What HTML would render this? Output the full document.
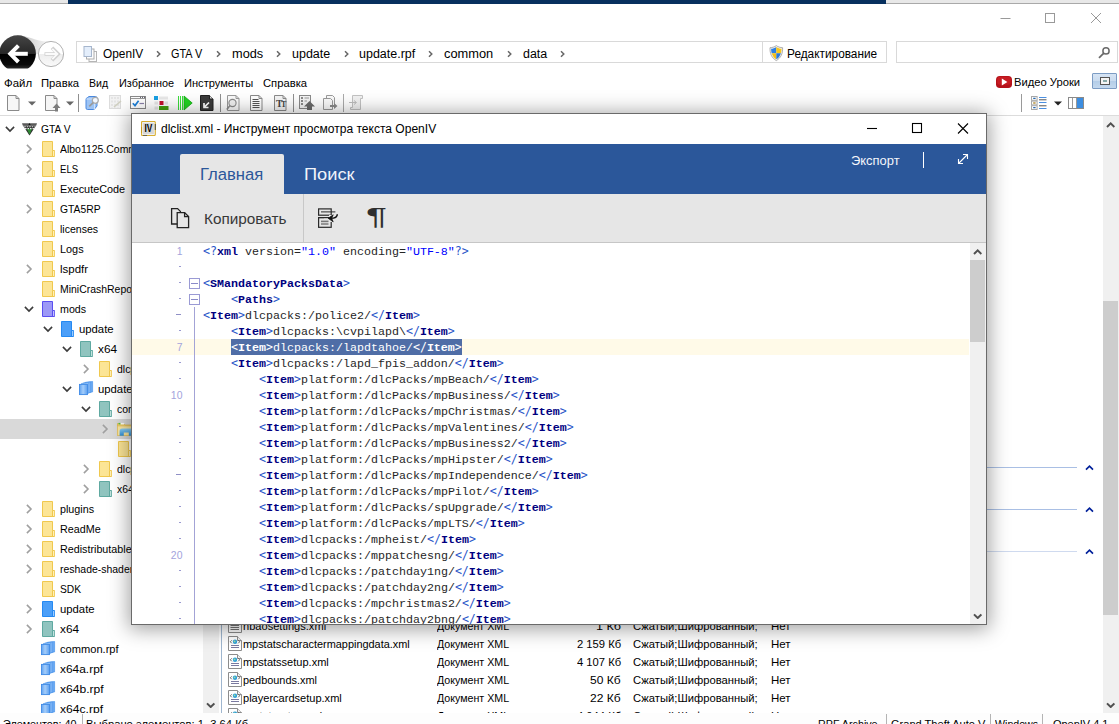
<!DOCTYPE html>
<html lang="ru"><head><meta charset="utf-8"><title>OpenIV</title>
<style>
html,body{margin:0;padding:0;}
body{width:1119px;height:724px;overflow:hidden;position:relative;background:#fff;font-family:'Liberation Sans', sans-serif;font-size:11px;}
.b{position:absolute;display:block;box-sizing:border-box;}
.t{position:absolute;white-space:pre;display:block;}
.code{position:absolute;white-space:pre;font-family:'Liberation Mono', monospace;font-size:11.667px;line-height:16px;color:#262626;height:16px;}
.code b{color:#000080;font-weight:bold;}
.code i{color:#2a55c8;font-style:normal;font-family:'DejaVu Sans Mono','Liberation Mono',monospace;font-size:11.628px;line-height:0;}
.code u{color:#0000ff;text-decoration:none;}
.sel{color:#fff;}
.sel b,.sel i,.sel u{color:#fff;}
</style></head><body>
<svg class="b" style="left:0;top:0;" width="0" height="0"><defs><linearGradient id="rg" x1="0" x2="1" y1="0" y2="0"><stop offset="0" stop-color="#5fa2f0"/><stop offset="0.45" stop-color="#a4cdfa"/><stop offset="1" stop-color="#5b9fef"/></linearGradient><linearGradient id="ob" x1="0" x2="0" y1="0" y2="1"><stop offset="0" stop-color="#8fd0f4"/><stop offset="1" stop-color="#2f8fd8"/></linearGradient><linearGradient id="gold" x1="0" y1="0" x2="1" y2="1"><stop offset="0" stop-color="#f3dc8a"/><stop offset="0.5" stop-color="#c9a13a"/><stop offset="1" stop-color="#e6c458"/></linearGradient></defs></svg>
<div class="b" style="left:0px;top:0px;width:1119px;height:3px;background:#e8e8e8;"></div>
<div class="b" style="left:0px;top:3px;width:1119px;height:1px;background:#a9a9a9;"></div>
<div class="b" style="left:68px;top:0px;width:818px;height:4px;background:#07305e;"></div>
<svg class="b" style="left:998px;top:10px;" width="112" height="18" viewBox="0 0 112 18"><path d="M2.5 8.5H12.5" stroke="#999" stroke-width="1" fill="none"/><rect x="47.5" y="3.5" width="9" height="9" stroke="#999" stroke-width="1" fill="none"/><path d="M93 3L103 13M103 3L93 13" stroke="#999" stroke-width="1" fill="none"/></svg>
<svg class="b" style="left:0px;top:33px;" width="70" height="40" viewBox="0 0 70 40"><defs><linearGradient id="tail" x1="0" x2="1" y1="0" y2="0"><stop offset="0" stop-color="#9a9a9a"/><stop offset="1" stop-color="#f4f4f4"/></linearGradient><linearGradient id="bk" x1="0" x2="0" y1="0" y2="1"><stop offset="0" stop-color="#454545"/><stop offset="0.52" stop-color="#262626"/><stop offset="0.52" stop-color="#000"/><stop offset="0.8" stop-color="#0a0a0a"/><stop offset="1" stop-color="#4a4a4a"/></linearGradient><linearGradient id="fw" x1="0" x2="0" y1="0" y2="1"><stop offset="0.5" stop-color="#fff"/><stop offset="0.5" stop-color="#ededed"/><stop offset="1" stop-color="#fafafa"/></linearGradient><clipPath id="bkc"><rect x="0" y="0" width="70" height="35.5"/></clipPath></defs><path d="M17 2.3 C29 2.3 36 9.5 51 8.4 L44 20 L30 22 Z" fill="url(#tail)" opacity="0.6"/><circle cx="51" cy="21" r="12.6" fill="url(#fw)" stroke="#a9a9a9" stroke-width="0.9"/><path d="M44.5 21H57M52 14.8L58.2 21L52 27.2" stroke="#cfcfcf" stroke-width="3.6" fill="none"/><path d="M45.3 21H57M52.3 15.8L57.4 21L52.3 26.2" stroke="#fbfbfb" stroke-width="1.8" fill="none"/><circle cx="17.6" cy="20.6" r="18.3" fill="url(#bk)" clip-path="url(#bkc)"/><path d="M11 20.8H27.8" stroke="#fff" stroke-width="4" fill="none"/><path d="M18.4 12.6L10.3 20.8L18.4 29" stroke="#fff" stroke-width="4" fill="none" stroke-linejoin="miter"/></svg>
<div class="b" style="left:76px;top:41px;width:811px;height:22px;background:#fff;border:1px solid #d9d9d9;"></div>
<svg class="b" style="left:82px;top:44px;" width="16" height="19" viewBox="0 0 16 19"><rect x="7" y="7.5" width="7.5" height="10" fill="#fdfdfd" stroke="#b5b5b5"/><rect x="4.5" y="5" width="7.5" height="10" fill="#fdfdfd" stroke="#adadad"/><rect x="2" y="2.5" width="7.5" height="10" fill="#e4eefb" stroke="#a6b6cd"/></svg>
<span id="t1" class="t" style="left:103.0px;top:45.5px;font-size:12px;line-height:16px;color:#000;transform:scaleX(0.9876);transform-origin:0 50%;">OpenIV</span>
<span id="t2" class="t" style="left:171.0px;top:45.5px;font-size:12px;line-height:16px;color:#000;transform:scaleX(0.9056);transform-origin:0 50%;">GTA V</span>
<span id="t3" class="t" style="left:232.0px;top:45.5px;font-size:12px;line-height:16px;color:#000;transform:scaleX(1.0633);transform-origin:0 50%;">mods</span>
<span id="t4" class="t" style="left:292.0px;top:45.5px;font-size:12px;line-height:16px;color:#000;transform:scaleX(1.0408);transform-origin:0 50%;">update</span>
<span id="t5" class="t" style="left:359.0px;top:45.5px;font-size:12px;line-height:16px;color:#000;transform:scaleX(1.0398);transform-origin:0 50%;">update.rpf</span>
<span id="t6" class="t" style="left:444.0px;top:45.5px;font-size:12px;line-height:16px;color:#000;transform:scaleX(1.0692);transform-origin:0 50%;">common</span>
<span id="t7" class="t" style="left:523.0px;top:45.5px;font-size:12px;line-height:16px;color:#000;transform:scaleX(1.0360);transform-origin:0 50%;">data</span>
<svg class="b" style="left:155.5px;top:50px;" width="6" height="8" viewBox="0 0 6 8"><path d="M1 1.2L3.8 4L1 6.8" stroke="#666" stroke-width="1.5" fill="none"/></svg>
<svg class="b" style="left:215.5px;top:50px;" width="6" height="8" viewBox="0 0 6 8"><path d="M1 1.2L3.8 4L1 6.8" stroke="#666" stroke-width="1.5" fill="none"/></svg>
<svg class="b" style="left:275.5px;top:50px;" width="6" height="8" viewBox="0 0 6 8"><path d="M1 1.2L3.8 4L1 6.8" stroke="#666" stroke-width="1.5" fill="none"/></svg>
<svg class="b" style="left:343.5px;top:50px;" width="6" height="8" viewBox="0 0 6 8"><path d="M1 1.2L3.8 4L1 6.8" stroke="#666" stroke-width="1.5" fill="none"/></svg>
<svg class="b" style="left:427.5px;top:50px;" width="6" height="8" viewBox="0 0 6 8"><path d="M1 1.2L3.8 4L1 6.8" stroke="#666" stroke-width="1.5" fill="none"/></svg>
<svg class="b" style="left:506.5px;top:50px;" width="6" height="8" viewBox="0 0 6 8"><path d="M1 1.2L3.8 4L1 6.8" stroke="#666" stroke-width="1.5" fill="none"/></svg>
<svg class="b" style="left:559.5px;top:50px;" width="6" height="8" viewBox="0 0 6 8"><path d="M1 1.2L3.8 4L1 6.8" stroke="#666" stroke-width="1.5" fill="none"/></svg>
<div class="b" style="left:762px;top:42px;width:1px;height:20px;background:#d9d9d9;"></div>
<svg class="b" style="left:768.5px;top:45px;" width="15" height="17" viewBox="0 0 15 17"><path d="M7.3 0.6C9.2 2 11.2 2.6 13.6 2.7C13.8 8.6 12 12.8 7.3 15.6C2.6 12.8 0.8 8.6 1 2.7C3.4 2.6 5.4 2 7.3 0.6Z" fill="#f2f2f2" stroke="#9a9a9a" stroke-width="0.8"/><path d="M7.3 1.9C5.7 3 4 3.6 2.1 3.7C2.1 5.4 2.3 6.9 2.7 8.2H7.3Z" fill="#2e80e2"/><path d="M7.3 1.9C8.9 3 10.6 3.6 12.5 3.7C12.5 5.4 12.3 6.9 11.9 8.2H7.3Z" fill="#f6c61c"/><path d="M2.7 8.2H7.3V14.3C4.9 12.8 3.5 10.8 2.7 8.2Z" fill="#f3be18"/><path d="M11.9 8.2H7.3V14.3C9.7 12.8 11.1 10.8 11.9 8.2Z" fill="#2a78da"/></svg>
<span id="t8" class="t" style="left:787.4px;top:45.5px;font-size:12px;line-height:16px;color:#000;transform:scaleX(0.9866);transform-origin:0 50%;">Редактирование</span>
<div class="b" style="left:896px;top:41px;width:222px;height:22px;background:#fff;border:1px solid #d9d9d9;"></div>
<svg class="b" style="left:1097px;top:46px;" width="14" height="14" viewBox="0 0 14 14"><circle cx="9" cy="4.9" r="3.1" stroke="#6a6a6a" stroke-width="1.5" fill="none"/><path d="M6.6 7.3L2 11.9" stroke="#6a6a6a" stroke-width="1.7"/></svg>
<span id="t9" class="t" style="left:4.45px;top:75.5px;font-size:11px;line-height:15px;color:#000;transform:scaleX(1.0389);transform-origin:0 50%;">Файл</span>
<span id="t10" class="t" style="left:41.45px;top:75.5px;font-size:11px;line-height:15px;color:#000;transform:scaleX(1.0250);transform-origin:0 50%;">Правка</span>
<span id="t11" class="t" style="left:89.45px;top:75.5px;font-size:11px;line-height:15px;color:#000;transform:scaleX(0.9595);transform-origin:0 50%;">Вид</span>
<span id="t12" class="t" style="left:119.45px;top:75.5px;font-size:11px;line-height:15px;color:#000;transform:scaleX(0.9883);transform-origin:0 50%;">Избранное</span>
<span id="t13" class="t" style="left:184.45px;top:75.5px;font-size:11px;line-height:15px;color:#000;transform:scaleX(1.0074);transform-origin:0 50%;">Инструменты</span>
<span id="t14" class="t" style="left:263.45px;top:75.5px;font-size:11px;line-height:15px;color:#000;transform:scaleX(1.0219);transform-origin:0 50%;">Справка</span>
<svg class="b" style="left:996px;top:76px;" width="16" height="12" viewBox="0 0 16 12"><rect x="0" y="0" width="16" height="12" rx="3.8" fill="#b5121a"/><rect x="1.2" y="0.8" width="13.6" height="8" rx="3" fill="#cc1f25" opacity="0.8"/><path d="M5.8 2.6L11.4 6L5.8 9.4Z" fill="#fff"/></svg>
<span id="t15" class="t" style="left:1014.45px;top:74.5px;font-size:11px;line-height:15px;color:#000;transform:scaleX(1.0186);transform-origin:0 50%;">Видео Уроки</span>
<div class="b" style="left:1092px;top:73px;width:25px;height:16px;background:linear-gradient(#d6e4f4 0%,#c9dbef 50%,#b4cde8 52%,#c3d8ee 100%);border:1px solid #7c9cc4;border-radius:1px;"></div>
<div class="b" style="left:1100px;top:77px;width:10px;height:8px;background:#f4f4f4;border:1px solid #555;"></div>
<div class="b" style="left:1103px;top:80px;width:4px;height:2px;background:#8aa;"></div>
<svg class="b" style="left:7px;top:95px;" width="12.5" height="16" viewBox="0 0 12.5 16"><path d="M0.5 0.5H9.0 L12.0 3.5V15.5H0.5Z" fill="#f6f6f6" stroke="#8a8a8a"/><path d="M9.0 0.5V3.5H12.0" fill="none" stroke="#8a8a8a"/></svg>
<svg class="b" style="left:28px;top:101px;" width="8" height="5" viewBox="0 0 8 5"><path d="M0 0.5H8L4 4.5Z" fill="#666"/></svg>
<svg class="b" style="left:45px;top:95px;" width="12.5" height="16" viewBox="0 0 12.5 16"><path d="M0.5 0.5H9.0 L12.0 3.5V15.5H0.5Z" fill="#f6f6f6" stroke="#8a8a8a"/><path d="M9.0 0.5V3.5H12.0" fill="none" stroke="#8a8a8a"/></svg>
<svg class="b" style="left:52px;top:103px;" width="9" height="9" viewBox="0 0 9 9"><path d="M4.5 0.5L8.5 5H6V8.5H3V5H0.5Z" fill="#7d7d7d"/></svg>
<svg class="b" style="left:66px;top:101px;" width="8" height="5" viewBox="0 0 8 5"><path d="M0 0.5H8L4 4.5Z" fill="#666"/></svg>
<div class="b" style="left:78px;top:94px;width:1px;height:18px;background:#8f8f8f;"></div>
<svg class="b" style="left:85px;top:95px;" width="15" height="16" viewBox="0 0 15 16"><path d="M1 4.5Q1 3 2.5 2.5L4 1.5H10.5Q12 1.5 12 3V11L10 13.5Q9.5 14.5 8.5 14.5H2.5Q1 14.5 1 13Z" fill="#9cc3f4" stroke="#4a88de"/><path d="M1.5 4H8.5Q9.5 4 9.5 5V14" fill="none" stroke="#cfe2fb"/><circle cx="10.3" cy="5.3" r="3" fill="#f1f7ff" stroke="#a8a8a8" stroke-width="1.2"/><path d="M8.2 7.6L4.2 11.4" stroke="#9a9a9a" stroke-width="1.7"/></svg>
<svg class="b" style="left:109px;top:95px;" width="14" height="16" viewBox="0 0 14 16"><rect x="0.5" y="0.5" width="11" height="13" fill="#f2f2f2" stroke="#dcdcdc"/><path d="M3 2V13M6 2V13M9 2V13" stroke="#d6d6d6" stroke-dasharray="2 1.5"/><path d="M5 12L12 6" stroke="#d0d0c0" stroke-width="1.5"/></svg>
<svg class="b" style="left:130px;top:96px;" width="17" height="14" viewBox="0 0 17 14"><rect x="0.5" y="0.5" width="15" height="12" fill="#fff" stroke="#8a8a8a"/><path d="M1 2.5H15" stroke="#9a9a9a"/><path d="M10 1.3H11M12 1.3H13M14 1.3H15" stroke="#445"/><path d="M2.8 7.2L5 9.6L8.6 4.8" stroke="#1e7fd6" stroke-width="1.7" fill="none"/><path d="M9.5 7.5H14" stroke="#8a80a8" stroke-width="1.2"/></svg>
<svg class="b" style="left:154px;top:96px;" width="15" height="14" viewBox="0 0 15 14"><rect x="0" y="0" width="4" height="4" fill="#18a0e4"/><rect x="5" y="0.5" width="9" height="3" fill="#e9e9e9"/><rect x="5.5" y="5" width="4" height="4" fill="#c4122f"/><rect x="0.5" y="5.5" width="3.5" height="3" fill="#e6e6e6"/><rect x="10.5" y="5.5" width="3.5" height="3" fill="#e6e6e6"/><rect x="5" y="10" width="9.5" height="4" fill="#44a010"/><rect x="0.5" y="10.5" width="3.5" height="3" fill="#e6e6e6"/></svg>
<svg class="b" style="left:177px;top:95px;" width="16" height="16" viewBox="0 0 16 16"><path d="M1.5 1V15M3.5 1V15M5.5 1V15" stroke="#25d825" stroke-width="0.9"/><path d="M7 1L15.2 8L7 15Z" fill="#22d322" stroke="#12a812" stroke-width="0.8"/></svg>
<svg class="b" style="left:200px;top:95px;" width="14" height="16" viewBox="0 0 14 16"><path d="M0.5 0.5H9.5L13 4V15.5H0.5Z" fill="#3c3c3c" stroke="#222"/><path d="M9.5 0.5V4H13" fill="#ddd" stroke="#222"/><path d="M4 8V12.5H8.5M4.3 12.2L9 7.5" stroke="#fff" stroke-width="1.7" fill="none"/></svg>
<div class="b" style="left:220px;top:94px;width:1px;height:18px;background:#8f8f8f;"></div>
<svg class="b" style="left:227px;top:95px;" width="12.5" height="16" viewBox="0 0 12.5 16"><path d="M0.5 0.5H9.0 L12.0 3.5V15.5H0.5Z" fill="#fafafa" stroke="#9a9a9a"/><path d="M9.0 0.5V3.5H12.0" fill="none" stroke="#9a9a9a"/></svg>
<svg class="b" style="left:226px;top:98px;" width="12" height="13" viewBox="0 0 12 13"><circle cx="6.5" cy="5" r="3.6" fill="#f1f1f1" stroke="#8a8a8a" stroke-width="1.1"/><path d="M4 7.6L0.8 11.5" stroke="#8a8a8a" stroke-width="1.5"/></svg>
<svg class="b" style="left:250px;top:95px;" width="12.5" height="16" viewBox="0 0 12.5 16"><path d="M0.5 0.5H9.0 L12.0 3.5V15.5H0.5Z" fill="#fff" stroke="#8a8a8a"/><path d="M9.0 0.5V3.5H12.0" fill="none" stroke="#8a8a8a"/></svg>
<svg class="b" style="left:252px;top:99px;" width="9" height="10" viewBox="0 0 9 10"><path d="M0.5 0.5H6.5M0.5 2.5H7.5M0.5 4.5H7.5M0.5 6.5H7.5M0.5 8.5H7.5" stroke="#555"/></svg>
<svg class="b" style="left:274px;top:95px;" width="12.5" height="16" viewBox="0 0 12.5 16"><path d="M0.5 0.5H9.0 L12.0 3.5V15.5H0.5Z" fill="#f4f4f4" stroke="#8a8a8a"/><path d="M9.0 0.5V3.5H12.0" fill="none" stroke="#8a8a8a"/></svg>
<span id="t16" class="t" style="left:276px;top:97.0px;font-size:10px;line-height:14px;color:#444;font-family:'Liberation Serif',serif;font-weight:bold;">T</span>
<span id="t17" class="t" style="left:281px;top:98.5px;font-size:8px;line-height:12px;color:#444;font-family:'Liberation Serif',serif;font-weight:bold;">T</span>
<div class="b" style="left:293px;top:94px;width:1px;height:18px;background:#8f8f8f;"></div>
<svg class="b" style="left:299px;top:95px;" width="17" height="16" viewBox="0 0 17 16"><rect x="0.5" y="0.5" width="11" height="13" fill="#f4f4f4" stroke="#8a8a8a"/><path d="M2 3H4M2 6H4M2 9H4" stroke="#666" stroke-width="1.4"/><path d="M5.5 3H10M5.5 6H8" stroke="#999"/><path d="M10.5 6L16 11.5H13V15H8V11.5H5Z" fill="#6a6a6a"/></svg>
<svg class="b" style="left:323px;top:95px;" width="15" height="16" viewBox="0 0 15 16"><path d="M3.5 0.5H9.5L11.5 2.5V10.5H3.5Z" fill="#fafafa" stroke="#9a9a9a"/><path d="M0.5 3.5H7.5L9.5 5.5V14.5H0.5Z" fill="#fafafa" stroke="#9a9a9a"/><path d="M7 10H11V8L14.5 11L11 14V12H7Z" fill="#8a8a8a"/></svg>
<div class="b" style="left:343px;top:94px;width:1px;height:18px;background:#aaa;"></div>
<svg class="b" style="left:349px;top:95px;" width="15" height="16" viewBox="0 0 15 16"><path d="M3.5 0.5H13.5V3.5H11.5V14.5H1.5V12.5H3.5Z" fill="#f1f1f1" stroke="#c2c2c2"/><path d="M0 7.5H7M5 5.5L7.5 7.5L5 9.5" stroke="#bdbdbd" fill="none"/></svg>
<div class="b" style="left:1021px;top:94px;width:1px;height:18px;background:#9a9a9a;"></div>
<svg class="b" style="left:1031px;top:96px;" width="16" height="14" viewBox="0 0 16 14"><rect x="0.5" y="0.5" width="5.6" height="3.8" fill="#fdfdfd" stroke="#a8a8a8"/><rect x="0.5" y="5.1" width="5.6" height="3.8" fill="#fdfdfd" stroke="#a8a8a8"/><rect x="0.5" y="9.7" width="5.6" height="3.8" fill="#fdfdfd" stroke="#a8a8a8"/><path d="M2.2 2.4H4.6M2.2 11.6H4.6" stroke="#2a6ab0" stroke-width="1.4"/><path d="M2.2 7H4.6" stroke="#b08a30" stroke-width="1.4"/><path d="M8 1.5H15.5M8 6.5H15.5M8 12.5H15.5" stroke="#4a90e2"/><path d="M8 3.8H15.5M8 9.8H15.5" stroke="#555"/></svg>
<svg class="b" style="left:1054px;top:101px;" width="8" height="5" viewBox="0 0 8 5"><path d="M0 0.5H8L4 4.5Z" fill="#222"/></svg>
<svg class="b" style="left:1068px;top:97px;" width="17" height="13" viewBox="0 0 17 13"><rect x="0.5" y="0.5" width="15" height="11" fill="#fff" stroke="#8a8a8a"/><rect x="9" y="1" width="6" height="10" fill="#3c8de0"/><path d="M4.5 1V11" stroke="#999"/><path d="M8.5 1V11" stroke="#999"/></svg>
<div class="b" style="left:0px;top:115px;width:1119px;height:1px;background:#dcdcdc;"></div>
<div class="b" style="left:0px;top:419px;width:203px;height:20px;background:#d9d9d9;"></div>
<div class="b" style="left:0;top:116px;width:203px;height:597px;overflow:hidden;">
<svg class="b" style="left:4.5px;top:10px;" width="10" height="7" viewBox="0 0 10 7"><path d="M0.9 0.9L5 5L9.1 0.9" stroke="#3c3c3c" stroke-width="1.6" fill="none"/></svg>
<svg class="b" style="left:22px;top:6.8px;" width="15" height="13" viewBox="0 0 15 13"><path d="M0 0.3H15L14.3 2.6H0.7Z" fill="#5a5a5a"/><path d="M1 2.6H14L7.5 12.4Z" fill="#2b2b2b"/><path d="M4.8 5.8L7.5 11.8L10.2 5.8Z" fill="#2f8a35"/><path d="M2.2 3.8H12.8M3 5.6H12" stroke="#e8e8e8" stroke-width="1.1" stroke-dasharray="1.6 0.9"/><path d="M6.4 2L7.5 0L8.6 2Z" fill="#111"/></svg>
<span id="t18" class="t" style="left:41.25px;top:5.5px;font-size:11px;line-height:15px;color:#000;transform:scaleX(0.9369);transform-origin:0 50%;">GTA V</span>
<svg class="b" style="left:25.5px;top:28px;" width="7" height="10" viewBox="0 0 7 10"><path d="M0.9 0.9L5 5L0.9 9.1" stroke="#a0a0a0" stroke-width="1.6" fill="none"/></svg>
<svg class="b" style="left:42px;top:25px;" width="14" height="17" viewBox="0 0 14 17"><path d="M0.5 0.5H10.5V9.5H12.5V15.5H0.5Z" fill="#fce596" stroke="#f0c84e"/><path d="M10.5 9.5V15.5" stroke="#f0c84e"/><rect x="11" y="10" width="1.2" height="5" fill="#fff0b8"/></svg>
<span id="t19" class="t" style="left:60.25px;top:25.5px;font-size:11px;line-height:15px;color:#000;transform:scaleX(0.95);transform-origin:0 50%;">Albo1125.Common</span>
<svg class="b" style="left:25.5px;top:48px;" width="7" height="10" viewBox="0 0 7 10"><path d="M0.9 0.9L5 5L0.9 9.1" stroke="#a0a0a0" stroke-width="1.6" fill="none"/></svg>
<svg class="b" style="left:42px;top:45px;" width="14" height="17" viewBox="0 0 14 17"><path d="M0.5 0.5H10.5V9.5H12.5V15.5H0.5Z" fill="#fce596" stroke="#f0c84e"/><path d="M10.5 9.5V15.5" stroke="#f0c84e"/><rect x="11" y="10" width="1.2" height="5" fill="#fff0b8"/></svg>
<span id="t20" class="t" style="left:60.25px;top:45.5px;font-size:11px;line-height:15px;color:#000;transform:scaleX(0.8703);transform-origin:0 50%;">ELS</span>
<svg class="b" style="left:42px;top:65px;" width="14" height="17" viewBox="0 0 14 17"><path d="M0.5 0.5H10.5V9.5H12.5V15.5H0.5Z" fill="#fce596" stroke="#f0c84e"/><path d="M10.5 9.5V15.5" stroke="#f0c84e"/><rect x="11" y="10" width="1.2" height="5" fill="#fff0b8"/></svg>
<span id="t21" class="t" style="left:60.25px;top:65.5px;font-size:11px;line-height:15px;color:#000;transform:scaleX(0.9857);transform-origin:0 50%;">ExecuteCode</span>
<svg class="b" style="left:25.5px;top:88px;" width="7" height="10" viewBox="0 0 7 10"><path d="M0.9 0.9L5 5L0.9 9.1" stroke="#a0a0a0" stroke-width="1.6" fill="none"/></svg>
<svg class="b" style="left:42px;top:85px;" width="14" height="17" viewBox="0 0 14 17"><path d="M0.5 0.5H10.5V9.5H12.5V15.5H0.5Z" fill="#fce596" stroke="#f0c84e"/><path d="M10.5 9.5V15.5" stroke="#f0c84e"/><rect x="11" y="10" width="1.2" height="5" fill="#fff0b8"/></svg>
<span id="t22" class="t" style="left:60.25px;top:85.5px;font-size:11px;line-height:15px;color:#000;transform:scaleX(0.9397);transform-origin:0 50%;">GTA5RP</span>
<svg class="b" style="left:42px;top:105px;" width="14" height="17" viewBox="0 0 14 17"><path d="M0.5 0.5H10.5V9.5H12.5V15.5H0.5Z" fill="#fce596" stroke="#f0c84e"/><path d="M10.5 9.5V15.5" stroke="#f0c84e"/><rect x="11" y="10" width="1.2" height="5" fill="#fff0b8"/></svg>
<span id="t23" class="t" style="left:60.25px;top:105.5px;font-size:11px;line-height:15px;color:#000;transform:scaleX(0.9585);transform-origin:0 50%;">licenses</span>
<svg class="b" style="left:42px;top:125px;" width="14" height="17" viewBox="0 0 14 17"><path d="M0.5 0.5H10.5V9.5H12.5V15.5H0.5Z" fill="#fce596" stroke="#f0c84e"/><path d="M10.5 9.5V15.5" stroke="#f0c84e"/><rect x="11" y="10" width="1.2" height="5" fill="#fff0b8"/></svg>
<span id="t24" class="t" style="left:60.25px;top:125.5px;font-size:11px;line-height:15px;color:#000;transform:scaleX(0.9891);transform-origin:0 50%;">Logs</span>
<svg class="b" style="left:25.5px;top:148px;" width="7" height="10" viewBox="0 0 7 10"><path d="M0.9 0.9L5 5L0.9 9.1" stroke="#a0a0a0" stroke-width="1.6" fill="none"/></svg>
<svg class="b" style="left:42px;top:145px;" width="14" height="17" viewBox="0 0 14 17"><path d="M0.5 0.5H10.5V9.5H12.5V15.5H0.5Z" fill="#fce596" stroke="#f0c84e"/><path d="M10.5 9.5V15.5" stroke="#f0c84e"/><rect x="11" y="10" width="1.2" height="5" fill="#fff0b8"/></svg>
<span id="t25" class="t" style="left:60.25px;top:145.5px;font-size:11px;line-height:15px;color:#000;transform:scaleX(1.0444);transform-origin:0 50%;">lspdfr</span>
<svg class="b" style="left:42px;top:165px;" width="14" height="17" viewBox="0 0 14 17"><path d="M0.5 0.5H10.5V9.5H12.5V15.5H0.5Z" fill="#fce596" stroke="#f0c84e"/><path d="M10.5 9.5V15.5" stroke="#f0c84e"/><rect x="11" y="10" width="1.2" height="5" fill="#fff0b8"/></svg>
<span id="t26" class="t" style="left:60.25px;top:165.5px;font-size:11px;line-height:15px;color:#000;transform:scaleX(0.95);transform-origin:0 50%;">MiniCrashReports</span>
<svg class="b" style="left:23.5px;top:190px;" width="10" height="7" viewBox="0 0 10 7"><path d="M0.9 0.9L5 5L9.1 0.9" stroke="#3c3c3c" stroke-width="1.6" fill="none"/></svg>
<svg class="b" style="left:42px;top:185px;" width="14" height="17" viewBox="0 0 14 17"><path d="M0.5 0.5H10.5V9.5H12.5V15.5H0.5Z" fill="#9d99f6" stroke="#5a4ff0"/><path d="M10.5 9.5V15.5" stroke="#5a4ff0"/><rect x="11" y="10" width="1.2" height="5" fill="#c3c0ff"/></svg>
<span id="t27" class="t" style="left:60.25px;top:185.5px;font-size:11px;line-height:15px;color:#000;transform:scaleX(0.9700);transform-origin:0 50%;">mods</span>
<svg class="b" style="left:42.5px;top:210px;" width="10" height="7" viewBox="0 0 10 7"><path d="M0.9 0.9L5 5L9.1 0.9" stroke="#3c3c3c" stroke-width="1.6" fill="none"/></svg>
<svg class="b" style="left:61px;top:205px;" width="14" height="17" viewBox="0 0 14 17"><path d="M0.5 0.5H10.5V9.5H12.5V15.5H0.5Z" fill="#4c9ff8" stroke="#2589f2"/><path d="M10.5 9.5V15.5" stroke="#2589f2"/><rect x="11" y="10" width="1.2" height="5" fill="#9ccbff"/></svg>
<span id="t28" class="t" style="left:79.25px;top:205.5px;font-size:11px;line-height:15px;color:#000;transform:scaleX(1.0280);transform-origin:0 50%;">update</span>
<svg class="b" style="left:61.5px;top:230px;" width="10" height="7" viewBox="0 0 10 7"><path d="M0.9 0.9L5 5L9.1 0.9" stroke="#3c3c3c" stroke-width="1.6" fill="none"/></svg>
<svg class="b" style="left:80px;top:225px;" width="14" height="17" viewBox="0 0 14 17"><path d="M0.5 0.5H10.5V9.5H12.5V15.5H0.5Z" fill="#90c4bf" stroke="#5fa9a1"/><path d="M10.5 9.5V15.5" stroke="#5fa9a1"/><rect x="11" y="10" width="1.2" height="5" fill="#c2e2de"/></svg>
<span id="t29" class="t" style="left:98.25px;top:225.5px;font-size:11px;line-height:15px;color:#000;transform:scaleX(1.0761);transform-origin:0 50%;">x64</span>
<svg class="b" style="left:82.5px;top:248px;" width="7" height="10" viewBox="0 0 7 10"><path d="M0.9 0.9L5 5L0.9 9.1" stroke="#a0a0a0" stroke-width="1.6" fill="none"/></svg>
<svg class="b" style="left:99px;top:245px;" width="14" height="17" viewBox="0 0 14 17"><path d="M0.5 0.5H10.5V9.5H12.5V15.5H0.5Z" fill="#fce596" stroke="#f0c84e"/><path d="M10.5 9.5V15.5" stroke="#f0c84e"/><rect x="11" y="10" width="1.2" height="5" fill="#fff0b8"/></svg>
<span id="t30" class="t" style="left:117.25px;top:245.5px;font-size:11px;line-height:15px;color:#000;transform:scaleX(0.95);transform-origin:0 50%;">dlcpacks</span>
<svg class="b" style="left:61.5px;top:270px;" width="10" height="7" viewBox="0 0 10 7"><path d="M0.9 0.9L5 5L9.1 0.9" stroke="#3c3c3c" stroke-width="1.6" fill="none"/></svg>
<svg class="b" style="left:79px;top:264.5px;" width="15" height="16" viewBox="0 0 15 16"><path d="M6.5 1.3L13.6 0.5V10.9L6.5 11.9Z" fill="#6eacf4" stroke="#4a93ea" stroke-width="0.7"/><path d="M4.5 1.9L11.7 1V11.5L4.5 12.5Z" fill="#86baf6" stroke="#4a93ea" stroke-width="0.7"/><path d="M2.5 2.5L9.8 1.6V12.1L2.5 13.1Z" fill="#9cc8f8" stroke="#4a93ea" stroke-width="0.7"/><rect x="0.5" y="3.4" width="8" height="10.2" fill="url(#rg)" stroke="#3f8ae6" stroke-width="0.9"/></svg>
<span id="t31" class="t" style="left:98.25px;top:265.5px;font-size:11px;line-height:15px;color:#000;transform:scaleX(1.0280);transform-origin:0 50%;">update</span>
<svg class="b" style="left:80.5px;top:290px;" width="10" height="7" viewBox="0 0 10 7"><path d="M0.9 0.9L5 5L9.1 0.9" stroke="#3c3c3c" stroke-width="1.6" fill="none"/></svg>
<svg class="b" style="left:99px;top:285px;" width="14" height="17" viewBox="0 0 14 17"><path d="M0.5 0.5H10.5V9.5H12.5V15.5H0.5Z" fill="#90c4bf" stroke="#5fa9a1"/><path d="M10.5 9.5V15.5" stroke="#5fa9a1"/><rect x="11" y="10" width="1.2" height="5" fill="#c2e2de"/></svg>
<span id="t32" class="t" style="left:117.25px;top:285.5px;font-size:11px;line-height:15px;color:#000;transform:scaleX(0.95);transform-origin:0 50%;">common</span>
<svg class="b" style="left:101.5px;top:308px;" width="7" height="10" viewBox="0 0 7 10"><path d="M0.9 0.9L5 5L0.9 9.1" stroke="#a0a0a0" stroke-width="1.6" fill="none"/></svg>
<svg class="b" style="left:117px;top:305.5px;" width="19" height="15" viewBox="0 0 19 15"><path d="M0.5 1.5H6.5L8 3H18V13.5H0.5Z" fill="#f3d06a" stroke="#dcb750" stroke-width="0.8"/><rect x="1.6" y="0.9" width="2" height="1.5" fill="#4cc446"/><rect x="3.6" y="0.9" width="3.6" height="1.5" fill="#fff"/><path d="M0.5 4H18V13.5H0.5Z" fill="#fbe7a2" stroke="#e2c05a" stroke-width="0.6"/><path d="M2.6 13.8V9.2Q2.6 6.6 5.2 6.6H13.4Q16 6.6 16 9.2V13.8H11.8V10.6H6.8V13.8Z" fill="url(#ob)"/></svg>
<span id="t33" class="t" style="left:136.25px;top:305.5px;font-size:11px;line-height:15px;color:#000;transform:scaleX(0.95);transform-origin:0 50%;">data</span>
<svg class="b" style="left:118px;top:325px;" width="14" height="17" viewBox="0 0 14 17"><path d="M0.5 0.5H10.5V9.5H12.5V15.5H0.5Z" fill="#fce596" stroke="#f0c84e"/><path d="M10.5 9.5V15.5" stroke="#f0c84e"/><rect x="11" y="10" width="1.2" height="5" fill="#fff0b8"/></svg>
<span id="t34" class="t" style="left:136.25px;top:325.5px;font-size:11px;line-height:15px;color:#000;transform:scaleX(0.95);transform-origin:0 50%;">dlc_patch</span>
<svg class="b" style="left:82.5px;top:348px;" width="7" height="10" viewBox="0 0 7 10"><path d="M0.9 0.9L5 5L0.9 9.1" stroke="#a0a0a0" stroke-width="1.6" fill="none"/></svg>
<svg class="b" style="left:99px;top:345px;" width="14" height="17" viewBox="0 0 14 17"><path d="M0.5 0.5H10.5V9.5H12.5V15.5H0.5Z" fill="#fce596" stroke="#f0c84e"/><path d="M10.5 9.5V15.5" stroke="#f0c84e"/><rect x="11" y="10" width="1.2" height="5" fill="#fff0b8"/></svg>
<span id="t35" class="t" style="left:117.25px;top:345.5px;font-size:11px;line-height:15px;color:#000;transform:scaleX(0.95);transform-origin:0 50%;">dlcpacks</span>
<svg class="b" style="left:82.5px;top:368px;" width="7" height="10" viewBox="0 0 7 10"><path d="M0.9 0.9L5 5L0.9 9.1" stroke="#a0a0a0" stroke-width="1.6" fill="none"/></svg>
<svg class="b" style="left:99px;top:365px;" width="14" height="17" viewBox="0 0 14 17"><path d="M0.5 0.5H10.5V9.5H12.5V15.5H0.5Z" fill="#90c4bf" stroke="#5fa9a1"/><path d="M10.5 9.5V15.5" stroke="#5fa9a1"/><rect x="11" y="10" width="1.2" height="5" fill="#c2e2de"/></svg>
<span id="t36" class="t" style="left:117.25px;top:365.5px;font-size:11px;line-height:15px;color:#000;transform:scaleX(0.95);transform-origin:0 50%;">x64</span>
<svg class="b" style="left:25.5px;top:388px;" width="7" height="10" viewBox="0 0 7 10"><path d="M0.9 0.9L5 5L0.9 9.1" stroke="#a0a0a0" stroke-width="1.6" fill="none"/></svg>
<svg class="b" style="left:42px;top:385px;" width="14" height="17" viewBox="0 0 14 17"><path d="M0.5 0.5H10.5V9.5H12.5V15.5H0.5Z" fill="#fce596" stroke="#f0c84e"/><path d="M10.5 9.5V15.5" stroke="#f0c84e"/><rect x="11" y="10" width="1.2" height="5" fill="#fff0b8"/></svg>
<span id="t37" class="t" style="left:60.25px;top:385.5px;font-size:11px;line-height:15px;color:#000;transform:scaleX(0.9782);transform-origin:0 50%;">plugins</span>
<svg class="b" style="left:25.5px;top:408px;" width="7" height="10" viewBox="0 0 7 10"><path d="M0.9 0.9L5 5L0.9 9.1" stroke="#a0a0a0" stroke-width="1.6" fill="none"/></svg>
<svg class="b" style="left:42px;top:405px;" width="14" height="17" viewBox="0 0 14 17"><path d="M0.5 0.5H10.5V9.5H12.5V15.5H0.5Z" fill="#fce596" stroke="#f0c84e"/><path d="M10.5 9.5V15.5" stroke="#f0c84e"/><rect x="11" y="10" width="1.2" height="5" fill="#fff0b8"/></svg>
<span id="t38" class="t" style="left:60.25px;top:405.5px;font-size:11px;line-height:15px;color:#000;transform:scaleX(0.9765);transform-origin:0 50%;">ReadMe</span>
<svg class="b" style="left:25.5px;top:428px;" width="7" height="10" viewBox="0 0 7 10"><path d="M0.9 0.9L5 5L0.9 9.1" stroke="#a0a0a0" stroke-width="1.6" fill="none"/></svg>
<svg class="b" style="left:42px;top:425px;" width="14" height="17" viewBox="0 0 14 17"><path d="M0.5 0.5H10.5V9.5H12.5V15.5H0.5Z" fill="#fce596" stroke="#f0c84e"/><path d="M10.5 9.5V15.5" stroke="#f0c84e"/><rect x="11" y="10" width="1.2" height="5" fill="#fff0b8"/></svg>
<span id="t39" class="t" style="left:60.25px;top:425.5px;font-size:11px;line-height:15px;color:#000;transform:scaleX(0.9758);transform-origin:0 50%;">Redistributable</span>
<svg class="b" style="left:25.5px;top:448px;" width="7" height="10" viewBox="0 0 7 10"><path d="M0.9 0.9L5 5L0.9 9.1" stroke="#a0a0a0" stroke-width="1.6" fill="none"/></svg>
<svg class="b" style="left:42px;top:445px;" width="14" height="17" viewBox="0 0 14 17"><path d="M0.5 0.5H10.5V9.5H12.5V15.5H0.5Z" fill="#fce596" stroke="#f0c84e"/><path d="M10.5 9.5V15.5" stroke="#f0c84e"/><rect x="11" y="10" width="1.2" height="5" fill="#fff0b8"/></svg>
<span id="t40" class="t" style="left:60.25px;top:445.5px;font-size:11px;line-height:15px;color:#000;transform:scaleX(0.95);transform-origin:0 50%;">reshade-shaders</span>
<svg class="b" style="left:42px;top:465px;" width="14" height="17" viewBox="0 0 14 17"><path d="M0.5 0.5H10.5V9.5H12.5V15.5H0.5Z" fill="#fce596" stroke="#f0c84e"/><path d="M10.5 9.5V15.5" stroke="#f0c84e"/><rect x="11" y="10" width="1.2" height="5" fill="#fff0b8"/></svg>
<span id="t41" class="t" style="left:60.25px;top:465.5px;font-size:11px;line-height:15px;color:#000;transform:scaleX(0.9326);transform-origin:0 50%;">SDK</span>
<svg class="b" style="left:25.5px;top:488px;" width="7" height="10" viewBox="0 0 7 10"><path d="M0.9 0.9L5 5L0.9 9.1" stroke="#a0a0a0" stroke-width="1.6" fill="none"/></svg>
<svg class="b" style="left:42px;top:485px;" width="14" height="17" viewBox="0 0 14 17"><path d="M0.5 0.5H10.5V9.5H12.5V15.5H0.5Z" fill="#4c9ff8" stroke="#2589f2"/><path d="M10.5 9.5V15.5" stroke="#2589f2"/><rect x="11" y="10" width="1.2" height="5" fill="#9ccbff"/></svg>
<span id="t42" class="t" style="left:60.25px;top:485.5px;font-size:11px;line-height:15px;color:#000;transform:scaleX(1.0280);transform-origin:0 50%;">update</span>
<svg class="b" style="left:25.5px;top:508px;" width="7" height="10" viewBox="0 0 7 10"><path d="M0.9 0.9L5 5L0.9 9.1" stroke="#a0a0a0" stroke-width="1.6" fill="none"/></svg>
<svg class="b" style="left:42px;top:505px;" width="14" height="17" viewBox="0 0 14 17"><path d="M0.5 0.5H10.5V9.5H12.5V15.5H0.5Z" fill="#90c4bf" stroke="#5fa9a1"/><path d="M10.5 9.5V15.5" stroke="#5fa9a1"/><rect x="11" y="10" width="1.2" height="5" fill="#c2e2de"/></svg>
<span id="t43" class="t" style="left:60.25px;top:505.5px;font-size:11px;line-height:15px;color:#000;transform:scaleX(1.0761);transform-origin:0 50%;">x64</span>
<svg class="b" style="left:41px;top:524.5px;" width="15" height="16" viewBox="0 0 15 16"><path d="M6.5 1.3L13.6 0.5V10.9L6.5 11.9Z" fill="#6eacf4" stroke="#4a93ea" stroke-width="0.7"/><path d="M4.5 1.9L11.7 1V11.5L4.5 12.5Z" fill="#86baf6" stroke="#4a93ea" stroke-width="0.7"/><path d="M2.5 2.5L9.8 1.6V12.1L2.5 13.1Z" fill="#9cc8f8" stroke="#4a93ea" stroke-width="0.7"/><rect x="0.5" y="3.4" width="8" height="10.2" fill="url(#rg)" stroke="#3f8ae6" stroke-width="0.9"/></svg>
<span id="t44" class="t" style="left:60.25px;top:525.5px;font-size:11px;line-height:15px;color:#000;transform:scaleX(1.0090);transform-origin:0 50%;">common.rpf</span>
<svg class="b" style="left:41px;top:544.5px;" width="15" height="16" viewBox="0 0 15 16"><path d="M6.5 1.3L13.6 0.5V10.9L6.5 11.9Z" fill="#6eacf4" stroke="#4a93ea" stroke-width="0.7"/><path d="M4.5 1.9L11.7 1V11.5L4.5 12.5Z" fill="#86baf6" stroke="#4a93ea" stroke-width="0.7"/><path d="M2.5 2.5L9.8 1.6V12.1L2.5 13.1Z" fill="#9cc8f8" stroke="#4a93ea" stroke-width="0.7"/><rect x="0.5" y="3.4" width="8" height="10.2" fill="url(#rg)" stroke="#3f8ae6" stroke-width="0.9"/></svg>
<span id="t45" class="t" style="left:60.25px;top:545.5px;font-size:11px;line-height:15px;color:#000;transform:scaleX(1.0843);transform-origin:0 50%;">x64a.rpf</span>
<svg class="b" style="left:41px;top:564.5px;" width="15" height="16" viewBox="0 0 15 16"><path d="M6.5 1.3L13.6 0.5V10.9L6.5 11.9Z" fill="#6eacf4" stroke="#4a93ea" stroke-width="0.7"/><path d="M4.5 1.9L11.7 1V11.5L4.5 12.5Z" fill="#86baf6" stroke="#4a93ea" stroke-width="0.7"/><path d="M2.5 2.5L9.8 1.6V12.1L2.5 13.1Z" fill="#9cc8f8" stroke="#4a93ea" stroke-width="0.7"/><rect x="0.5" y="3.4" width="8" height="10.2" fill="url(#rg)" stroke="#3f8ae6" stroke-width="0.9"/></svg>
<span id="t46" class="t" style="left:60.25px;top:565.5px;font-size:11px;line-height:15px;color:#000;transform:scaleX(1.0969);transform-origin:0 50%;">x64b.rpf</span>
<svg class="b" style="left:41px;top:584.5px;" width="15" height="16" viewBox="0 0 15 16"><path d="M6.5 1.3L13.6 0.5V10.9L6.5 11.9Z" fill="#6eacf4" stroke="#4a93ea" stroke-width="0.7"/><path d="M4.5 1.9L11.7 1V11.5L4.5 12.5Z" fill="#86baf6" stroke="#4a93ea" stroke-width="0.7"/><path d="M2.5 2.5L9.8 1.6V12.1L2.5 13.1Z" fill="#9cc8f8" stroke="#4a93ea" stroke-width="0.7"/><rect x="0.5" y="3.4" width="8" height="10.2" fill="url(#rg)" stroke="#3f8ae6" stroke-width="0.9"/></svg>
<span id="t47" class="t" style="left:60.25px;top:585.5px;font-size:11px;line-height:15px;color:#000;transform:scaleX(1.1012);transform-origin:0 50%;">x64c.rpf</span>
</div>
<div class="b" style="left:203px;top:116px;width:16px;height:597px;background:#f0f0f0;"></div>
<svg class="b" style="left:205.8px;top:701.8px;" width="9.4" height="6.4" viewBox="0 0 9.4 6.4"><path d="M1 1.4L4.7 5.0L8.4 1.4" stroke="#505050" stroke-width="2" fill="none"/></svg>
<div class="b" style="left:221px;top:116px;width:1px;height:597px;background:#9fb6cf;"></div>
<div class="b" style="left:222px;top:116px;width:881px;height:597px;overflow:hidden;">
<svg class="b" style="left:6px;top:502.0px;" width="15" height="16" viewBox="0 0 15 16"><path d="M0.5 0.5H9.5L13.5 4.5V14.5H0.5Z" fill="#fff" stroke="#8c8c8c"/><path d="M9.5 0.5V4.5H13.5" fill="#f0f0f0" stroke="#8c8c8c"/><path d="M2.5 5.5H11M2.5 7.5H11M2.5 9.5H11M2.5 11.5H11" stroke="#777"/></svg>
<span id="t48" class="t" style="left:21.45px;top:503.0px;font-size:11px;line-height:15px;color:#000;transform:scaleX(1.0067);transform-origin:0 50%;">hbaosettings.xml</span>
<span id="t49" class="t" style="left:215.45px;top:503.0px;font-size:11px;line-height:15px;color:#000;transform:scaleX(0.9680);transform-origin:0 50%;">Документ XML</span>
<span id="t50" class="t" style="left:373.95px;top:503.0px;font-size:11px;line-height:15px;color:#000;transform:scaleX(1.1466);transform-origin:0 50%;">1 Кб</span>
<span id="t51" class="t" style="left:411.45px;top:503.0px;font-size:11px;line-height:15px;color:#000;transform:scaleX(1.0199);transform-origin:0 50%;">Сжатый;Шифрованный;</span>
<span id="t52" class="t" style="left:548.95px;top:503.0px;font-size:11px;line-height:15px;color:#000;transform:scaleX(1.0462);transform-origin:0 50%;">Нет</span>
<svg class="b" style="left:6px;top:520.0px;" width="15" height="16" viewBox="0 0 15 16"><path d="M0.5 0.5H9.5L13.5 4.5V14.5H0.5Z" fill="#fff" stroke="#8c8c8c"/><path d="M9.5 0.5V4.5H13.5" fill="#f0f0f0" stroke="#8c8c8c"/><circle cx="7" cy="5.8" r="2.2" fill="#2f9fd8"/><circle cx="6.6" cy="5.4" r="0.9" fill="#9fe0a0"/><path d="M3.8 4.3L2.3 5.8L3.8 7.3M10.2 4.3L11.7 5.8L10.2 7.3" stroke="#555" stroke-width="0.9" fill="none"/><path d="M3 9.5H11M3 11.5H11" stroke="#7a7aa0"/></svg>
<span id="t53" class="t" style="left:21.45px;top:521.0px;font-size:11px;line-height:15px;color:#000;transform:scaleX(0.9920);transform-origin:0 50%;">mpstatscharactermappingdata.xml</span>
<span id="t54" class="t" style="left:215.45px;top:521.0px;font-size:11px;line-height:15px;color:#000;transform:scaleX(0.9680);transform-origin:0 50%;">Документ XML</span>
<span id="t55" class="t" style="left:354.95px;top:521.0px;font-size:11px;line-height:15px;color:#000;transform:scaleX(1.0185);transform-origin:0 50%;">2 159 Кб</span>
<span id="t56" class="t" style="left:411.45px;top:521.0px;font-size:11px;line-height:15px;color:#000;transform:scaleX(1.0199);transform-origin:0 50%;">Сжатый;Шифрованный;</span>
<span id="t57" class="t" style="left:548.95px;top:521.0px;font-size:11px;line-height:15px;color:#000;transform:scaleX(1.0462);transform-origin:0 50%;">Нет</span>
<svg class="b" style="left:6px;top:538.0px;" width="15" height="16" viewBox="0 0 15 16"><path d="M0.5 0.5H9.5L13.5 4.5V14.5H0.5Z" fill="#fff" stroke="#8c8c8c"/><path d="M9.5 0.5V4.5H13.5" fill="#f0f0f0" stroke="#8c8c8c"/><circle cx="7" cy="5.8" r="2.2" fill="#2f9fd8"/><circle cx="6.6" cy="5.4" r="0.9" fill="#9fe0a0"/><path d="M3.8 4.3L2.3 5.8L3.8 7.3M10.2 4.3L11.7 5.8L10.2 7.3" stroke="#555" stroke-width="0.9" fill="none"/><path d="M3 9.5H11M3 11.5H11" stroke="#7a7aa0"/></svg>
<span id="t58" class="t" style="left:21.45px;top:539.0px;font-size:11px;line-height:15px;color:#000;transform:scaleX(1.0024);transform-origin:0 50%;">mpstatssetup.xml</span>
<span id="t59" class="t" style="left:215.45px;top:539.0px;font-size:11px;line-height:15px;color:#000;transform:scaleX(0.9680);transform-origin:0 50%;">Документ XML</span>
<span id="t60" class="t" style="left:354.95px;top:539.0px;font-size:11px;line-height:15px;color:#000;transform:scaleX(1.0185);transform-origin:0 50%;">4 107 Кб</span>
<span id="t61" class="t" style="left:411.45px;top:539.0px;font-size:11px;line-height:15px;color:#000;transform:scaleX(1.0199);transform-origin:0 50%;">Сжатый;Шифрованный;</span>
<span id="t62" class="t" style="left:548.95px;top:539.0px;font-size:11px;line-height:15px;color:#000;transform:scaleX(1.0462);transform-origin:0 50%;">Нет</span>
<svg class="b" style="left:6px;top:556.0px;" width="15" height="16" viewBox="0 0 15 16"><path d="M0.5 0.5H9.5L13.5 4.5V14.5H0.5Z" fill="#fff" stroke="#8c8c8c"/><path d="M9.5 0.5V4.5H13.5" fill="#f0f0f0" stroke="#8c8c8c"/><circle cx="7" cy="5.8" r="2.2" fill="#2f9fd8"/><circle cx="6.6" cy="5.4" r="0.9" fill="#9fe0a0"/><path d="M3.8 4.3L2.3 5.8L3.8 7.3M10.2 4.3L11.7 5.8L10.2 7.3" stroke="#555" stroke-width="0.9" fill="none"/><path d="M3 9.5H11M3 11.5H11" stroke="#7a7aa0"/></svg>
<span id="t63" class="t" style="left:21.45px;top:557.0px;font-size:11px;line-height:15px;color:#000;transform:scaleX(0.9905);transform-origin:0 50%;">pedbounds.xml</span>
<span id="t64" class="t" style="left:215.45px;top:557.0px;font-size:11px;line-height:15px;color:#000;transform:scaleX(0.9680);transform-origin:0 50%;">Документ XML</span>
<span id="t65" class="t" style="left:368.45px;top:557.0px;font-size:11px;line-height:15px;color:#000;transform:scaleX(1.0929);transform-origin:0 50%;">50 Кб</span>
<span id="t66" class="t" style="left:411.45px;top:557.0px;font-size:11px;line-height:15px;color:#000;transform:scaleX(1.0199);transform-origin:0 50%;">Сжатый;Шифрованный;</span>
<span id="t67" class="t" style="left:548.95px;top:557.0px;font-size:11px;line-height:15px;color:#000;transform:scaleX(1.0462);transform-origin:0 50%;">Нет</span>
<svg class="b" style="left:6px;top:574.0px;" width="15" height="16" viewBox="0 0 15 16"><path d="M0.5 0.5H9.5L13.5 4.5V14.5H0.5Z" fill="#fff" stroke="#8c8c8c"/><path d="M9.5 0.5V4.5H13.5" fill="#f0f0f0" stroke="#8c8c8c"/><circle cx="7" cy="5.8" r="2.2" fill="#2f9fd8"/><circle cx="6.6" cy="5.4" r="0.9" fill="#9fe0a0"/><path d="M3.8 4.3L2.3 5.8L3.8 7.3M10.2 4.3L11.7 5.8L10.2 7.3" stroke="#555" stroke-width="0.9" fill="none"/><path d="M3 9.5H11M3 11.5H11" stroke="#7a7aa0"/></svg>
<span id="t68" class="t" style="left:21.45px;top:575.0px;font-size:11px;line-height:15px;color:#000;transform:scaleX(1.0037);transform-origin:0 50%;">playercardsetup.xml</span>
<span id="t69" class="t" style="left:215.45px;top:575.0px;font-size:11px;line-height:15px;color:#000;transform:scaleX(0.9680);transform-origin:0 50%;">Документ XML</span>
<span id="t70" class="t" style="left:368.45px;top:575.0px;font-size:11px;line-height:15px;color:#000;transform:scaleX(1.0929);transform-origin:0 50%;">22 Кб</span>
<span id="t71" class="t" style="left:411.45px;top:575.0px;font-size:11px;line-height:15px;color:#000;transform:scaleX(1.0199);transform-origin:0 50%;">Сжатый;Шифрованный;</span>
<span id="t72" class="t" style="left:548.95px;top:575.0px;font-size:11px;line-height:15px;color:#000;transform:scaleX(1.0462);transform-origin:0 50%;">Нет</span>
<svg class="b" style="left:6px;top:592.0px;" width="15" height="16" viewBox="0 0 15 16"><path d="M0.5 0.5H9.5L13.5 4.5V14.5H0.5Z" fill="#fff" stroke="#8c8c8c"/><path d="M9.5 0.5V4.5H13.5" fill="#f0f0f0" stroke="#8c8c8c"/><circle cx="7" cy="5.8" r="2.2" fill="#2f9fd8"/><circle cx="6.6" cy="5.4" r="0.9" fill="#9fe0a0"/><path d="M3.8 4.3L2.3 5.8L3.8 7.3M10.2 4.3L11.7 5.8L10.2 7.3" stroke="#555" stroke-width="0.9" fill="none"/><path d="M3 9.5H11M3 11.5H11" stroke="#7a7aa0"/></svg>
<span id="t73" class="t" style="left:21.45px;top:593.0px;font-size:11px;line-height:15px;color:#000;transform:scaleX(0.9656);transform-origin:0 50%;">spstatssetup.xml</span>
<span id="t74" class="t" style="left:215.45px;top:593.0px;font-size:11px;line-height:15px;color:#000;transform:scaleX(0.9680);transform-origin:0 50%;">Документ XML</span>
<span id="t75" class="t" style="left:354.95px;top:593.0px;font-size:11px;line-height:15px;color:#000;transform:scaleX(1.0185);transform-origin:0 50%;">4 044 Кб</span>
<span id="t76" class="t" style="left:411.45px;top:593.0px;font-size:11px;line-height:15px;color:#000;transform:scaleX(1.0199);transform-origin:0 50%;">Сжатый;Шифрованный;</span>
<span id="t77" class="t" style="left:548.95px;top:593.0px;font-size:11px;line-height:15px;color:#000;transform:scaleX(1.0462);transform-origin:0 50%;">Нет</span>
</div>
<div class="b" style="left:987px;top:467px;width:90px;height:1px;background:#a9bfe4;"></div>
<svg class="b" style="left:1085px;top:465px;" width="9" height="6" viewBox="0 0 9 6"><path d="M1 4.6L4.5 1.2L8 4.6" stroke="#00209a" stroke-width="1.7" fill="none"/></svg>
<div class="b" style="left:987px;top:509px;width:90px;height:1px;background:#a9bfe4;"></div>
<svg class="b" style="left:1085px;top:507px;" width="9" height="6" viewBox="0 0 9 6"><path d="M1 4.6L4.5 1.2L8 4.6" stroke="#00209a" stroke-width="1.7" fill="none"/></svg>
<div class="b" style="left:987px;top:551px;width:90px;height:1px;background:#cfdaef;"></div>
<svg class="b" style="left:1085px;top:549px;" width="9" height="6" viewBox="0 0 9 6"><path d="M1 4.6L4.5 1.2L8 4.6" stroke="#00209a" stroke-width="1.7" fill="none"/></svg>
<div class="b" style="left:1103px;top:116px;width:16px;height:597px;background:#f0f0f0;"></div>
<div class="b" style="left:1103px;top:301px;width:15px;height:314px;background:#cdcdcd;"></div>
<svg class="b" style="left:1105.8px;top:121.8px;" width="9.4" height="6.4" viewBox="0 0 9.4 6.4"><path d="M1 5.0L4.7 1.4L8.4 5.0" stroke="#505050" stroke-width="2" fill="none"/></svg>
<svg class="b" style="left:1105.8px;top:701.8px;" width="9.4" height="6.4" viewBox="0 0 9.4 6.4"><path d="M1 1.4L4.7 5.0L8.4 1.4" stroke="#505050" stroke-width="2" fill="none"/></svg>
<div class="b" style="left:0px;top:713px;width:1119px;height:11px;background:#fdfdfd;"></div>
<div class="b" style="left:0;top:713px;width:1119px;height:11px;overflow:hidden;">
<span id="t78" class="t" style="left:3.45px;top:3.6000000000000227px;font-size:11px;line-height:15px;color:#000;transform:scaleX(0.9805);transform-origin:0 50%;">Элементов: 40</span>
<div class="b" style="left:82px;top:1px;width:1px;height:10px;background:#b4b4b4;"></div>
<span id="t79" class="t" style="left:86.45px;top:3.6000000000000227px;font-size:11px;line-height:15px;color:#000;transform:scaleX(1.0189);transform-origin:0 50%;">Выбрано элементов: 1, 3,64 Кб</span>
<span id="t80" class="t" style="left:817.95px;top:3.6000000000000227px;font-size:11px;line-height:15px;color:#000;transform:scaleX(0.9748);transform-origin:0 50%;">RPF Archive</span>
<div class="b" style="left:886px;top:1px;width:1px;height:10px;background:#b4b4b4;"></div>
<span id="t81" class="t" style="left:891.45px;top:3.6000000000000227px;font-size:11px;line-height:15px;color:#000;transform:scaleX(1.0046);transform-origin:0 50%;">Grand Theft Auto V</span>
<div class="b" style="left:990px;top:1px;width:1px;height:10px;background:#b4b4b4;"></div>
<span id="t82" class="t" style="left:995.45px;top:3.6000000000000227px;font-size:11px;line-height:15px;color:#000;transform:scaleX(0.9658);transform-origin:0 50%;">Windows</span>
<div class="b" style="left:1042px;top:1px;width:1px;height:10px;background:#b4b4b4;"></div>
<span id="t83" class="t" style="left:1053.15px;top:3.6000000000000227px;font-size:11px;line-height:15px;color:#000;transform:scaleX(0.9954);transform-origin:0 50%;">OpenIV 4.1</span>
</div>
<div class="b" style="left:131px;top:113px;width:856px;height:512px;background:#fff;border:1px solid #6a6a6a;box-shadow:0 2px 19px 2px rgba(0,0,0,0.38);overflow:hidden;">
<svg class="b" style="left:9px;top:6.5px;" width="15" height="15" viewBox="0 0 15 15"><rect x="0.5" y="0.5" width="13.8" height="14" rx="1" fill="#f4f4f4" stroke="#d8ae30" stroke-width="1.1"/><path d="M14.3 3V9" stroke="#55503a" stroke-width="1.1"/><path d="M2 14.5H6" stroke="#6a644a" stroke-width="1.1"/><path d="M0.5 6V12" stroke="#c89a1c" stroke-width="1.1"/><rect x="1.9" y="1.9" width="11" height="11.2" fill="#d6d6d6"/><text x="7.4" y="10.6" font-family="Liberation Sans, sans-serif" font-size="10.4" font-weight="bold" text-anchor="middle" fill="#000" textLength="7.8" lengthAdjust="spacingAndGlyphs">IV</text></svg>
<span id="t84" class="t" style="left:28.9px;top:6.5px;font-size:12px;line-height:16px;color:#000;transform:scaleX(1.0030);transform-origin:0 50%;">dlclist.xml - Инструмент просмотра текста OpenIV</span>
<svg class="b" style="left:728px;top:4px;" width="115" height="20" viewBox="0 0 115 20"><path d="M7 10.5H17" stroke="#000" stroke-width="1.1"/><rect x="52.5" y="5.5" width="9" height="9" stroke="#000" stroke-width="1.1" fill="none"/><path d="M98 5.5L108 15.5M108 5.5L98 15.5" stroke="#000" stroke-width="1.1"/></svg>
<div class="b" style="left:0px;top:30px;width:855px;height:50px;background:#2b579a;"></div>
<div class="b" style="left:48px;top:40px;width:104px;height:40px;background:#e6e6e6;border-radius:2px 2px 0 0;"></div>
<span id="t85" class="t" style="left:67.74px;top:50.20000000000001px;font-size:17.2px;line-height:21.2px;color:#2b579a;transform:scaleX(0.9679);transform-origin:0 50%;">Главная</span>
<span id="t86" class="t" style="left:171.94px;top:50.20000000000001px;font-size:17.2px;line-height:21.2px;color:#f1f4fa;transform:scaleX(1.0604);transform-origin:0 50%;">Поиск</span>
<span id="t87" class="t" style="left:718.5500000000001px;top:38.0px;font-size:13px;line-height:17px;color:#f4f6fb;transform:scaleX(0.9947);transform-origin:0 50%;">Экспорт</span>
<div class="b" style="left:791px;top:38px;width:1px;height:16px;background:#fff;"></div>
<svg class="b" style="left:825px;top:39px;" width="12" height="12" viewBox="0 0 12 12"><path d="M1.5 10.5L10.5 1.5M6 1.5H10.5V6M1.5 6V10.5H6" stroke="#fff" stroke-width="1.1" fill="none"/></svg>
<div class="b" style="left:0px;top:80px;width:855px;height:48px;background:#e6e6e6;"></div>
<div class="b" style="left:0px;top:128px;width:855px;height:1px;background:#c6c6c6;"></div>
<div class="b" style="left:171px;top:80px;width:1px;height:48px;background:#c8c8c8;"></div>
<svg class="b" style="left:38px;top:93px;" width="20" height="22" viewBox="0 0 20 22"><path d="M1.6 1.6H7.6L10.4 4.4V17H1.6Z" fill="#e6e6e6" stroke="#222" stroke-width="1.3"/><path d="M7.2 5.6H14.6L18.6 9.6V20.6H7.2Z" fill="#e6e6e6" stroke="#222" stroke-width="1.3"/><path d="M14.6 5.6V9.6H18.6" fill="none" stroke="#222" stroke-width="1.3"/></svg>
<span id="t88" class="t" style="left:71.55000000000001px;top:95.1px;font-size:15px;line-height:19px;color:#383838;transform:scaleX(1.0215);transform-origin:0 50%;">Копировать</span>
<svg class="b" style="left:185px;top:93px;" width="22" height="22" viewBox="0 0 22 22"><rect x="1.6" y="1.9" width="12.6" height="6.3" fill="none" stroke="#2a2a2a" stroke-width="1.2"/><path d="M4 4.9H18.4" stroke="#2a2a2a" stroke-width="1"/><rect x="1.6" y="10.6" width="12.6" height="9.7" fill="none" stroke="#2a2a2a" stroke-width="1.2"/><rect x="12" y="8" width="5" height="7" fill="#e6e6e6"/><path d="M1.6 10.6H7" stroke="#2a2a2a" stroke-width="1.2"/><path d="M4 14.4H11.5" stroke="#777" stroke-width="1.6"/><path d="M4 17H11.5" stroke="#444" stroke-width="1"/><path d="M20.3 7.2C20.3 10.2 18 11.3 13.5 11.3" stroke="#111" stroke-width="1.5" fill="none"/><path d="M16.2 7.8L11.2 11.3L16.2 14.8L14.6 11.3Z" fill="#111" stroke="#111" stroke-width="0.8"/></svg>
<span id="t89" class="t" style="left:233.76px;top:88.79999999999998px;font-size:24.8px;line-height:28.8px;color:#2e2e2e;transform:scaleX(1.5816);transform-origin:0 50%;">¶</span>
<div class="b" style="left:0px;top:225px;width:837px;height:16px;background:#fffae8;"></div>
<div class="b" style="left:62px;top:129px;width:1px;height:381px;background:#a3a3d6;"></div>
<div class="code" style="left:71px;top:130px;"><i>&lt;?</i><b>xml</b> version=<u>"1.0"</u> encoding=<u>"UTF-8"</u><i>?&gt;</i></div>
<div class="b" style="left:21px;top:131.5px;width:30px;text-align:right;font-family:'Liberation Sans', sans-serif;font-size:10.4px;letter-spacing:0.4px;line-height:12px;color:#a3a3dc;">1</div>
<div class="b" style="left:47px;top:152px;width:2px;height:1px;background:#9a9ad0;"></div>
<div class="code" style="left:71px;top:162px;"><i>&lt;</i><b>SMandatoryPacksData</b><i>&gt;</i></div>
<div class="b" style="left:47px;top:168px;width:2px;height:1px;background:#9a9ad0;"></div>
<div class="code" style="left:99px;top:178px;"><i>&lt;</i><b>Paths</b><i>&gt;</i></div>
<div class="b" style="left:47px;top:184px;width:2px;height:1px;background:#9a9ad0;"></div>
<div class="code" style="left:71px;top:194px;"><i>&lt;</i><b>Item</b><i>&gt;</i>dlcpacks:/police2/<i>&lt;/</i><b>Item</b><i>&gt;</i></div>
<div class="b" style="left:44px;top:200px;width:5px;height:1px;background:#8f8fc6;"></div>
<div class="code" style="left:99px;top:210px;"><i>&lt;</i><b>Item</b><i>&gt;</i>dlcpacks:\cvpilapd\<i>&lt;/</i><b>Item</b><i>&gt;</i></div>
<div class="b" style="left:47px;top:216px;width:2px;height:1px;background:#9a9ad0;"></div>
<div class="b" style="left:99px;top:225px;width:231px;height:16px;background:#4f6da6;"></div>
<div class="code sel" style="left:99px;top:226px;"><i>&lt;</i><b>Item</b><i>&gt;</i>dlcpacks:/lapdtahoe/<i>&lt;/</i><b>Item</b><i>&gt;</i></div>
<div class="b" style="left:21px;top:227.5px;width:30px;text-align:right;font-family:'Liberation Sans', sans-serif;font-size:10.4px;letter-spacing:0.4px;line-height:12px;color:#a3a3dc;">7</div>
<div class="code" style="left:99px;top:242px;"><i>&lt;</i><b>Item</b><i>&gt;</i>dlcpacks:/lapd_fpis_addon/<i>&lt;/</i><b>Item</b><i>&gt;</i></div>
<div class="b" style="left:47px;top:248px;width:2px;height:1px;background:#9a9ad0;"></div>
<div class="code" style="left:127px;top:258px;"><i>&lt;</i><b>Item</b><i>&gt;</i>platform:/dlcPacks/mpBeach/<i>&lt;/</i><b>Item</b><i>&gt;</i></div>
<div class="b" style="left:47px;top:264px;width:2px;height:1px;background:#9a9ad0;"></div>
<div class="code" style="left:127px;top:274px;"><i>&lt;</i><b>Item</b><i>&gt;</i>platform:/dlcPacks/mpBusiness/<i>&lt;/</i><b>Item</b><i>&gt;</i></div>
<div class="b" style="left:21px;top:275.5px;width:30px;text-align:right;font-family:'Liberation Sans', sans-serif;font-size:10.4px;letter-spacing:0.4px;line-height:12px;color:#a3a3dc;">10</div>
<div class="code" style="left:127px;top:290px;"><i>&lt;</i><b>Item</b><i>&gt;</i>platform:/dlcPacks/mpChristmas/<i>&lt;/</i><b>Item</b><i>&gt;</i></div>
<div class="b" style="left:47px;top:296px;width:2px;height:1px;background:#9a9ad0;"></div>
<div class="code" style="left:127px;top:306px;"><i>&lt;</i><b>Item</b><i>&gt;</i>platform:/dlcPacks/mpValentines/<i>&lt;/</i><b>Item</b><i>&gt;</i></div>
<div class="b" style="left:47px;top:312px;width:2px;height:1px;background:#9a9ad0;"></div>
<div class="code" style="left:127px;top:322px;"><i>&lt;</i><b>Item</b><i>&gt;</i>platform:/dlcPacks/mpBusiness2/<i>&lt;/</i><b>Item</b><i>&gt;</i></div>
<div class="b" style="left:47px;top:328px;width:2px;height:1px;background:#9a9ad0;"></div>
<div class="code" style="left:127px;top:338px;"><i>&lt;</i><b>Item</b><i>&gt;</i>platform:/dlcPacks/mpHipster/<i>&lt;/</i><b>Item</b><i>&gt;</i></div>
<div class="b" style="left:47px;top:344px;width:2px;height:1px;background:#9a9ad0;"></div>
<div class="code" style="left:127px;top:354px;"><i>&lt;</i><b>Item</b><i>&gt;</i>platform:/dlcPacks/mpIndependence/<i>&lt;/</i><b>Item</b><i>&gt;</i></div>
<div class="b" style="left:44px;top:360px;width:5px;height:1px;background:#8f8fc6;"></div>
<div class="code" style="left:127px;top:370px;"><i>&lt;</i><b>Item</b><i>&gt;</i>platform:/dlcPacks/mpPilot/<i>&lt;/</i><b>Item</b><i>&gt;</i></div>
<div class="b" style="left:47px;top:376px;width:2px;height:1px;background:#9a9ad0;"></div>
<div class="code" style="left:127px;top:386px;"><i>&lt;</i><b>Item</b><i>&gt;</i>platform:/dlcPacks/spUpgrade/<i>&lt;/</i><b>Item</b><i>&gt;</i></div>
<div class="b" style="left:47px;top:392px;width:2px;height:1px;background:#9a9ad0;"></div>
<div class="code" style="left:127px;top:402px;"><i>&lt;</i><b>Item</b><i>&gt;</i>platform:/dlcPacks/mpLTS/<i>&lt;/</i><b>Item</b><i>&gt;</i></div>
<div class="b" style="left:47px;top:408px;width:2px;height:1px;background:#9a9ad0;"></div>
<div class="code" style="left:127px;top:418px;"><i>&lt;</i><b>Item</b><i>&gt;</i>dlcpacks:/mpheist/<i>&lt;/</i><b>Item</b><i>&gt;</i></div>
<div class="b" style="left:47px;top:424px;width:2px;height:1px;background:#9a9ad0;"></div>
<div class="code" style="left:127px;top:434px;"><i>&lt;</i><b>Item</b><i>&gt;</i>dlcpacks:/mppatchesng/<i>&lt;/</i><b>Item</b><i>&gt;</i></div>
<div class="b" style="left:21px;top:435.5px;width:30px;text-align:right;font-family:'Liberation Sans', sans-serif;font-size:10.4px;letter-spacing:0.4px;line-height:12px;color:#a3a3dc;">20</div>
<div class="code" style="left:127px;top:450px;"><i>&lt;</i><b>Item</b><i>&gt;</i>dlcpacks:/patchday1ng/<i>&lt;/</i><b>Item</b><i>&gt;</i></div>
<div class="b" style="left:47px;top:456px;width:2px;height:1px;background:#9a9ad0;"></div>
<div class="code" style="left:127px;top:466px;"><i>&lt;</i><b>Item</b><i>&gt;</i>dlcpacks:/patchday2ng/<i>&lt;/</i><b>Item</b><i>&gt;</i></div>
<div class="b" style="left:47px;top:472px;width:2px;height:1px;background:#9a9ad0;"></div>
<div class="code" style="left:127px;top:482px;"><i>&lt;</i><b>Item</b><i>&gt;</i>dlcpacks:/mpchristmas2/<i>&lt;/</i><b>Item</b><i>&gt;</i></div>
<div class="b" style="left:47px;top:488px;width:2px;height:1px;background:#9a9ad0;"></div>
<div class="code" style="left:127px;top:498px;"><i>&lt;</i><b>Item</b><i>&gt;</i>dlcpacks:/patchday2bng/<i>&lt;/</i><b>Item</b><i>&gt;</i></div>
<div class="b" style="left:47px;top:504px;width:2px;height:1px;background:#9a9ad0;"></div>
<div class="b" style="left:57px;top:164px;width:11px;height:11px;background:#fff;border:1px solid #9a9ad4;"></div>
<div class="b" style="left:59px;top:169px;width:7px;height:1px;background:#8a8ac8;"></div>
<div class="b" style="left:57px;top:180px;width:11px;height:11px;background:#fff;border:1px solid #9a9ad4;"></div>
<div class="b" style="left:59px;top:185px;width:7px;height:1px;background:#8a8ac8;"></div>
<div class="b" style="left:62px;top:129px;width:1px;height:35px;background:#fff;"></div>
<div class="b" style="left:62px;top:175px;width:1px;height:5px;background:#fff;"></div>
<div class="b" style="left:62px;top:191px;width:1px;height:2px;background:#fff;"></div>
<div class="b" style="left:838px;top:129px;width:16px;height:381px;background:#f0f0f0;"></div>
<div class="b" style="left:838px;top:146px;width:15px;height:82px;background:#cdcdcd;"></div>
<svg class="b" style="left:840.8px;top:135.0px;" width="9.4" height="6.4" viewBox="0 0 9.4 6.4"><path d="M1 5.0L4.7 1.4L8.4 5.0" stroke="#505050" stroke-width="2" fill="none"/></svg>
<svg class="b" style="left:840.8px;top:498.79999999999995px;" width="9.4" height="6.4" viewBox="0 0 9.4 6.4"><path d="M1 1.4L4.7 5.0L8.4 1.4" stroke="#505050" stroke-width="2" fill="none"/></svg>
</div>
</body></html>
